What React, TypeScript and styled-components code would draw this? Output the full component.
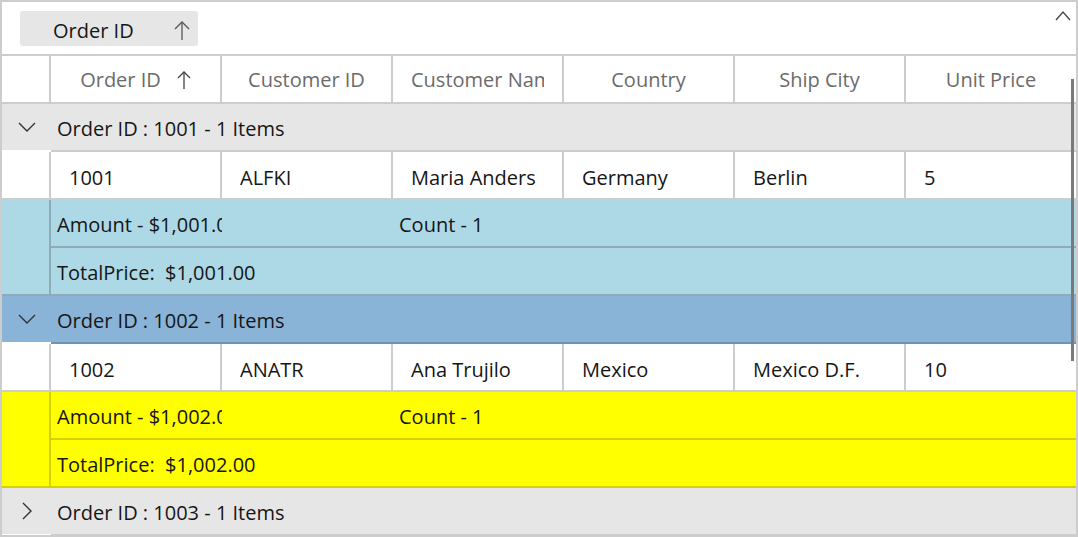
import React from 'react';
import styled, { createGlobalStyle } from 'styled-components';

const Global = createGlobalStyle`
  *, *::before, *::after { box-sizing: border-box; }
  html, body { margin: 0; padding: 0; background: #fff; }
  body { font-family: "Open Sans", "Noto Sans", sans-serif; }
`;

type Tone = { bg: string; line: string };
const TONES: Record<string, Tone> = {
  gray: { bg: '#e6e6e6', line: '#cccccc' },
  steel: { bg: '#89b3d7', line: '#6f93b2' },
  blue: { bg: '#add8e6', line: '#8eacb7' },
  yellow: { bg: '#ffff00', line: '#d2d200' },
};

const Grid = styled.div`
  position: relative;
  width: 1078px;
  height: 537px;
  border: 2px solid #cdcdcd;
  overflow: hidden;
  background: #fff;
  font-size: 20px;
  color: #161616;
`;

const DropArea = styled.div`
  height: 54px;
  border-bottom: 2px solid #cdcdcd;
  display: flex;
  align-items: flex-start;
  justify-content: space-between;
  padding: 9px 5px 0 18px;
`;

const Chip = styled.div`
  width: 178px;
  height: 35px;
  background: #e6e6e6;
  border-radius: 3px;
  display: flex;
  align-items: center;
  justify-content: space-between;
  padding: 4px 8px 0 33px;
`;

const Collapse = styled.div`
  display: flex;
`;

const HeaderRow = styled.div`
  display: flex;
  height: 48px;
  border-bottom: 2px solid #cdcdcd;
`;

const Indent = styled.div<{ $bg?: string; $line?: string; $bottom?: boolean }>`
  flex: 0 0 49px;
  height: 100%;
  background: ${(p) => p.$bg ?? '#fff'};
  border-right: 2px solid ${(p) => p.$line ?? '#cdcdcd'};
  border-bottom: ${(p) => (p.$bottom ? `2px solid ${p.$line ?? '#cdcdcd'}` : 'none')};
`;

const HeaderCell = styled.div<{ $last?: boolean }>`
  flex: ${(p) => (p.$last ? '1 1 auto' : '0 0 171px')};
  border-right: ${(p) => (p.$last ? 'none' : '2px solid #cdcdcd')};
  padding: 1px 18px 0;
  display: flex;
  align-items: center;
  justify-content: center;
  gap: 16px;
  color: #6b6b6b;
  overflow: hidden;
`;

const HeaderText = styled.span`
  white-space: nowrap;
  overflow: hidden;
  flex: 0 1 auto;
`;

const GroupRow = styled.div`
  display: flex;
  height: 48px;
`;

const GroupIndent = styled.div<{ $tone: Tone }>`
  flex: 0 0 49px;
  height: 46px;
  background: ${(p) => p.$tone.bg};
  display: flex;
  align-items: center;
  justify-content: center;
`;

const GroupContent = styled.div<{ $tone: Tone }>`
  flex: 1;
  height: 48px;
  background: ${(p) => p.$tone.bg};
  border-bottom: 2px solid ${(p) => p.$tone.line};
  display: flex;
  align-items: center;
  padding: 2px 0 0 6px;
`;

const DataRow = styled.div`
  display: flex;
  height: 48px;
  border-bottom: 2px solid #cdcdcd;
`;

const DataCell = styled.div<{ $last?: boolean }>`
  flex: ${(p) => (p.$last ? '1 1 auto' : '0 0 171px')};
  border-right: ${(p) => (p.$last ? 'none' : '2px solid #cdcdcd')};
  padding: 5px 0 0 18px;
  display: flex;
  align-items: center;
  white-space: nowrap;
  overflow: hidden;
`;

const SummaryRow = styled.div<{ $tone: Tone }>`
  display: flex;
  height: 48px;
  background: ${(p) => p.$tone.bg};
`;

const SummaryContent = styled.div<{ $tone: Tone }>`
  flex: 1;
  display: flex;
  border-bottom: 2px solid ${(p) => p.$tone.line};
`;

const SummaryCell = styled.div<{ $wide?: boolean }>`
  flex: ${(p) => (p.$wide ? '1 1 auto' : '0 0 171px')};
  padding: 2px 5px 0 6px;
  display: flex;
  align-items: center;
  white-space: pre;
  overflow: hidden;
`;

const ScrollThumb = styled.div`
  position: absolute;
  left: 1069px;
  top: 77px;
  width: 3px;
  height: 282px;
  background: #7a7a7a;
`;

const UpArrow = ({ w = 16, h = 19, color = '#555' }: { w?: number; h?: number; color?: string }) => (
  <svg width={w} height={h} viewBox={`0 0 ${w} ${h}`} fill="none" stroke={color} strokeWidth={1.3}>
    <path d={`M${w / 2} 1 V${h}`} />
    <path d={`M1 ${w / 2} L${w / 2} 1 L${w - 1} ${w / 2}`} />
  </svg>
);

const ChevronDown = () => (
  <svg width="18" height="10" viewBox="0 0 18 10" fill="none" stroke="#333" strokeWidth={1.4}>
    <path d="M1 1 L9 9 L17 1" />
  </svg>
);

const ChevronRight = () => (
  <svg width="10" height="18" viewBox="0 0 10 18" fill="none" stroke="#333" strokeWidth={1.4}>
    <path d="M1 1 L9 9 L1 17" />
  </svg>
);

const ChevronUp = () => (
  <svg width="16" height="10" viewBox="0 0 16 10" fill="none" stroke="#444" strokeWidth={1.3}>
    <path d="M1 9 L8 1 L15 9" />
  </svg>
);

const columns = ['Order ID', 'Customer ID', 'Customer Name', 'Country', 'Ship City', 'Unit Price'];

type Order = { id: string; cust: string; name: string; country: string; city: string; price: string; total: string };
const orders: Order[] = [
  { id: '1001', cust: 'ALFKI', name: 'Maria Anders', country: 'Germany', city: 'Berlin', price: '5', total: '$1,001.00' },
  { id: '1002', cust: 'ANATR', name: 'Ana Trujilo', country: 'Mexico', city: 'Mexico D.F.', price: '10', total: '$1,002.00' },
];

const Group = ({ o, head, sum }: { o: Order; head: Tone; sum: Tone }) => (
  <>
    <GroupRow>
      <GroupIndent $tone={head}>
        <ChevronDown />
      </GroupIndent>
      <GroupContent $tone={head}>Order ID : {o.id} - 1 Items</GroupContent>
    </GroupRow>
    <DataRow>
      <Indent />
      {[o.id, o.cust, o.name, o.country, o.city, o.price].map((v, i) => (
        <DataCell key={i} $last={i === 5}>
          {v}
        </DataCell>
      ))}
    </DataRow>
    <SummaryRow $tone={sum}>
      <Indent $bg={sum.bg} $line={sum.line} />
      <SummaryContent $tone={sum}>
        <SummaryCell>Amount - {o.total}</SummaryCell>
        <SummaryCell />
        <SummaryCell $wide>Count - 1</SummaryCell>
      </SummaryContent>
    </SummaryRow>
    <SummaryRow $tone={sum}>
      <Indent $bg={sum.bg} $line={sum.line} $bottom />
      <SummaryContent $tone={sum}>
        <SummaryCell $wide>{`TotalPrice:  ${o.total}`}</SummaryCell>
      </SummaryContent>
    </SummaryRow>
  </>
);

export default function App() {
  return (
    <>
      <Global />
      <Grid>
        <DropArea>
          <Chip>
            <span>Order ID</span>
            <UpArrow />
          </Chip>
          <Collapse>
            <ChevronUp />
          </Collapse>
        </DropArea>
        <HeaderRow>
          <Indent />
          {columns.map((c, i) => (
            <HeaderCell key={c} $last={i === columns.length - 1}>
              <HeaderText>{c}</HeaderText>
              {i === 0 && <UpArrow w={14} h={18} color="#444" />}
            </HeaderCell>
          ))}
        </HeaderRow>
        <Group o={orders[0]} head={TONES.gray} sum={TONES.blue} />
        <Group o={orders[1]} head={TONES.steel} sum={TONES.yellow} />
        <GroupRow>
          <GroupIndent $tone={TONES.gray}>
            <ChevronRight />
          </GroupIndent>
          <GroupContent $tone={TONES.gray}>Order ID : 1003 - 1 Items</GroupContent>
        </GroupRow>
        <ScrollThumb />
      </Grid>
    </>
  );
}
